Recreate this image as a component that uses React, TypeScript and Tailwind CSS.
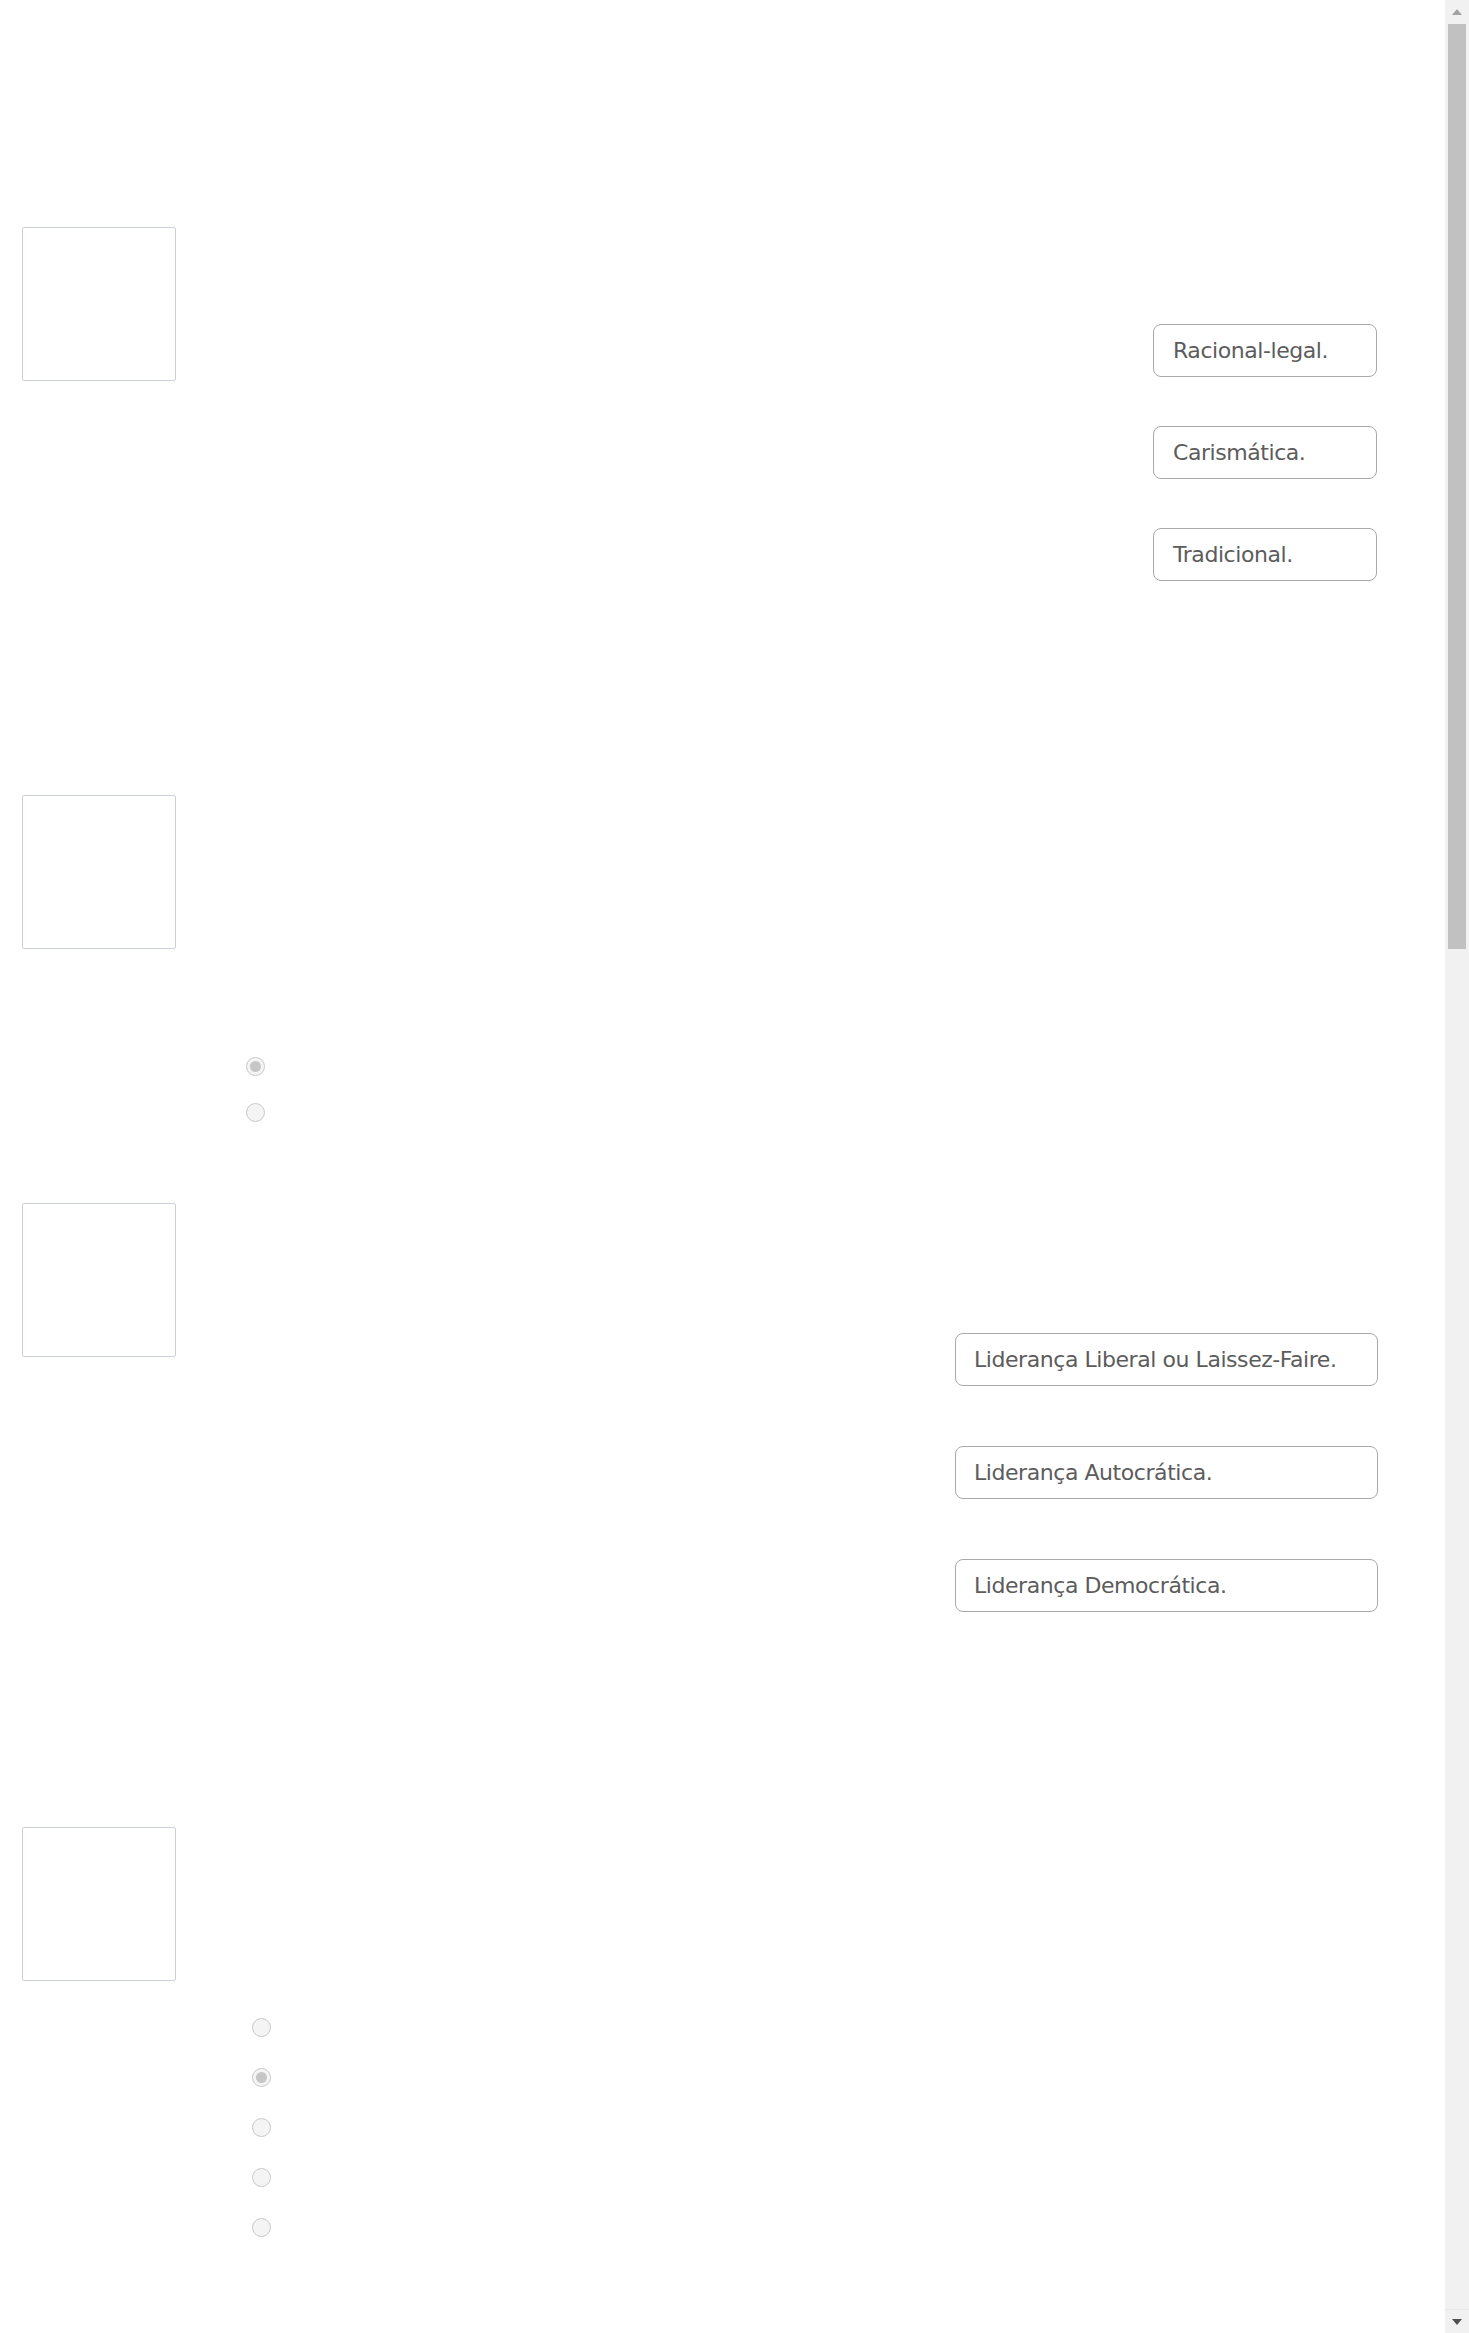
import React from 'react';

const ImageBox = () => (
    <div className="w-[154px] h-[154px] shrink-0 rounded-[2px] border border-[#cbd0d8] bg-white" />
);

const Choice = ({ label, wide }: { label: string; wide?: boolean }) => (
    <div
        className={
            wide
                ? "w-[423px] h-[53px] flex items-center px-[18px] rounded-[8px] border border-[#a9a9a9] bg-white"
                : "w-[224px] h-[53px] flex items-center px-[19px] rounded-[8px] border border-[#a9a9a9] bg-white"
        }
    >
        <span className="text-[22px] leading-none tracking-[-0.02em] text-[#5c5c5c] whitespace-nowrap">{label}</span>
    </div>
);

const Radio = ({ checked }: { checked?: boolean }) => (
    <span className="w-[19px] h-[19px] rounded-full border-[1.5px] border-[#c9c9c9] bg-[#f4f4f4] flex items-center justify-center">
        {checked && <span className="w-[11px] h-[11px] rounded-full bg-[#c6c6c6]" />}
    </span>
);

const Scrollbar = () => (
    <div className="w-[24px] shrink-0 h-full bg-[#f1f1f1] flex flex-col">
        <div className="h-[24px] flex items-center justify-center">
            <svg width="10" height="6" viewBox="0 0 10 6">
                <path d="M5 0 L10 6 L0 6 Z" fill="#a3a3a3" />
            </svg>
        </div>
        <div className="mx-[3px] h-[925px] bg-[#c1c1c1]" />
        <div className="flex-1" />
        <div className="h-[24px] flex items-center justify-center border-t border-[#e9e9e9]">
            <svg width="10" height="6" viewBox="0 0 10 6">
                <path d="M0 0 L10 0 L5 6 Z" fill="#505050" />
            </svg>
        </div>
    </div>
);

export default function App() {
    return (
        <div
            className="w-full h-[2333px] flex bg-white overflow-hidden"
            style={{ fontFamily: '"DejaVu Sans", "Liberation Sans", sans-serif' }}
        >
            <div className="flex-1 flex flex-col pl-[22px] pr-[67px]">
                {/* question 1 */}
                <div className="pt-[227px] flex items-start">
                    <ImageBox />
                    <div className="ml-auto mr-[1px] mt-[97px] flex flex-col gap-[49px]">
                        <Choice label="Racional-legal." />
                        <Choice label="Carismática." />
                        <Choice label="Tradicional." />
                    </div>
                </div>

                {/* question 2 */}
                <div className="mt-[214px]">
                    <ImageBox />
                    <div className="mt-[108px] ml-[224px] flex flex-col gap-[27px]">
                        <Radio checked />
                        <Radio />
                    </div>
                </div>

                {/* question 3 */}
                <div className="mt-[81px] flex items-start">
                    <ImageBox />
                    <div className="ml-auto mt-[130px] flex flex-col gap-[60px]">
                        <Choice wide label="Liderança Liberal ou Laissez-Faire." />
                        <Choice wide label="Liderança Autocrática." />
                        <Choice wide label="Liderança Democrática." />
                    </div>
                </div>

                {/* question 4 */}
                <div className="mt-[215px]">
                    <ImageBox />
                    <div className="mt-[37px] ml-[230px] flex flex-col gap-[31px]">
                        <Radio />
                        <Radio checked />
                        <Radio />
                        <Radio />
                        <Radio />
                    </div>
                </div>
            </div>
            <Scrollbar />
        </div>
    );
}
